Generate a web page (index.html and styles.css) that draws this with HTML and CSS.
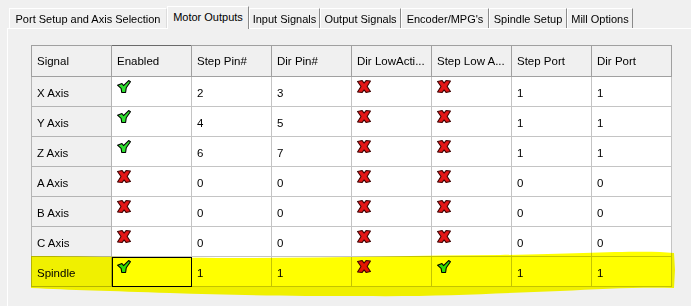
FILE: index.html
```html
<!DOCTYPE html>
<html>
<head>
<meta charset="utf-8">
<link rel="stylesheet" href="styles.css">
</head>
<body>
<svg class="defs" width="0" height="0">
  <symbol id="ok" viewBox="0 0 13 12">
    <path d="M0.5 4.8 L4.6 3.2 L6.1 5.2 L10.8 0.5 L12.5 1.6 L8.6 7.2 L8 11.5 L4.4 11.5 L3.8 7.8 Z" fill="#2ee02e" stroke="#000" stroke-width="1" stroke-linejoin="round"/>
  </symbol>
  <symbol id="no" viewBox="0 0 13 12">
    <path d="M0.5 1.3 L4.8 0.5 L6.6 2.8 L8.4 0.5 L12.5 0.9 L9.4 6 L12.5 10.7 L8.4 11.5 L6.6 9.2 L4.8 11.5 L0.5 11.1 L3.7 6 Z" fill="#e41616" stroke="#3c0000" stroke-width="1" stroke-linejoin="round"/>
  </symbol>
</svg>

<div class="tabs">
  <div class="tab t1">Port Setup and Axis Selection</div>
  <div class="tab t2 sel">Motor Outputs</div>
  <div class="tab t3">Input Signals</div>
  <div class="tab t4">Output Signals</div>
  <div class="tab t5">Encoder/MPG's</div>
  <div class="tab t6">Spindle Setup</div>
  <div class="tab t7">Mill Options</div>
</div>

<div class="panel">
  <table class="grid">
    <thead>
      <tr class="head">
        <th>Signal</th>
        <th class="cur">Enabled</th>
        <th>Step Pin#</th>
        <th>Dir Pin#</th>
        <th>Dir LowActi...</th>
        <th>Step Low A...</th>
        <th>Step Port</th>
        <th>Dir Port</th>
      </tr>
    </thead>
    <tbody>
      <tr>
        <th class="rh">X Axis</th>
        <td class="ic"><svg class="i"><use href="#ok"/></svg></td>
        <td>2</td><td>3</td>
        <td class="ic"><svg class="i"><use href="#no"/></svg></td>
        <td class="ic"><svg class="i"><use href="#no"/></svg></td>
        <td>1</td><td>1</td>
      </tr>
      <tr>
        <th class="rh">Y Axis</th>
        <td class="ic"><svg class="i"><use href="#ok"/></svg></td>
        <td>4</td><td>5</td>
        <td class="ic"><svg class="i"><use href="#no"/></svg></td>
        <td class="ic"><svg class="i"><use href="#no"/></svg></td>
        <td>1</td><td>1</td>
      </tr>
      <tr>
        <th class="rh">Z Axis</th>
        <td class="ic"><svg class="i"><use href="#ok"/></svg></td>
        <td>6</td><td>7</td>
        <td class="ic"><svg class="i"><use href="#no"/></svg></td>
        <td class="ic"><svg class="i"><use href="#no"/></svg></td>
        <td>1</td><td>1</td>
      </tr>
      <tr>
        <th class="rh">A Axis</th>
        <td class="ic"><svg class="i"><use href="#no"/></svg></td>
        <td>0</td><td>0</td>
        <td class="ic"><svg class="i"><use href="#no"/></svg></td>
        <td class="ic"><svg class="i"><use href="#no"/></svg></td>
        <td>0</td><td>0</td>
      </tr>
      <tr>
        <th class="rh">B Axis</th>
        <td class="ic"><svg class="i"><use href="#no"/></svg></td>
        <td>0</td><td>0</td>
        <td class="ic"><svg class="i"><use href="#no"/></svg></td>
        <td class="ic"><svg class="i"><use href="#no"/></svg></td>
        <td>0</td><td>0</td>
      </tr>
      <tr>
        <th class="rh">C Axis</th>
        <td class="ic"><svg class="i"><use href="#no"/></svg></td>
        <td>0</td><td>0</td>
        <td class="ic"><svg class="i"><use href="#no"/></svg></td>
        <td class="ic"><svg class="i"><use href="#no"/></svg></td>
        <td>0</td><td>0</td>
      </tr>
      <tr>
        <th class="rh">Spindle</th>
        <td class="ic selcell"><svg class="i"><use href="#ok"/></svg></td>
        <td>1</td><td>1</td>
        <td class="ic"><svg class="i"><use href="#no"/></svg></td>
        <td class="ic"><svg class="i"><use href="#ok"/></svg></td>
        <td>1</td><td>1</td>
      </tr>
    </tbody>
  </table>
</div>

<svg class="hl" width="691" height="306" viewBox="0 0 691 306">
  <path d="M31 256 C 90 256, 160 258, 250 258 C 340 258, 420 255, 500 255 C 570 254, 620 251, 660 252 L 674 253 L 675 270 L 674 288 C 640 287, 600 289, 560 291 C 500 293, 440 297, 360 296 C 290 296, 230 295, 170 293 C 110 291, 70 290, 31 288 Z" fill="#ffff00"/>
</svg>
</body>
</html>
```

FILE: styles.css
```css
html, body {
  margin: 0;
  padding: 0;
}

body {
  width: 691px;
  height: 306px;
  overflow: hidden;
  position: relative;
  background: #f0f0f0;
  font-family: "Liberation Sans", Arial, sans-serif;
  color: #000;
}

.defs {
  position: absolute;
  width: 0;
  height: 0;
}

/* ---------- tabs ---------- */
.tabs {
  display: flex;
  align-items: flex-end;
  height: 28px;
  padding-left: 9px;
  box-sizing: border-box;
}

.tab {
  height: 20px;
  box-sizing: border-box;
  font-size: 11px;
  line-height: 20px;
  text-align: center;
  white-space: nowrap;
  background: #f0f0f0;
  border-top: 1px solid #ffffff;
  border-left: 1px solid #ffffff;
  border-right: 1px solid #8a8a8a;
}

.tab.sel {
  height: 23px;
  margin-bottom: -1px;
  line-height: 20px;
  position: relative;
  z-index: 1;
}

.t1 { width: 158px; border-right-color: #dcdcdc; }
.t2 { width: 82px; }
.t3 { width: 71px; }
.t4 { width: 81px; }
.t5 { width: 88px; }
.t6 { width: 78px; }
.t7 { width: 66px; }

/* ---------- panel ---------- */
.panel {
  margin-left: 7px;
  height: 278px;
  box-sizing: border-box;
  border-top: 1px solid #ffffff;
  border-left: 1px solid #ffffff;
  padding: 16px 0 0 23px;
}

/* ---------- grid ---------- */
.grid {
  border-collapse: collapse;
  table-layout: fixed;
  width: 641px;
  font-size: 11.5px;
  background: #ffffff;
  border: 1px solid #8c8c8c;
}

.grid tr {
  height: 30px;
}

.grid tr.head {
  height: 31px;
}

.grid th,
.grid td {
  padding: 3px 4px 0 5px;
  text-align: left;
  font-weight: normal;
  white-space: nowrap;
  overflow: hidden;
  vertical-align: middle;
  border: 1px solid #c4c4c4;
}

.grid thead th {
  background: #f0f0f0;
  padding-top: 0;
  border-color: #a0a0a0;
}

.grid thead th.cur {
  border-left-color: #6a6a6a;
  border-top-color: #6a6a6a;
}

.grid th.rh {
  background: #f0f0f0;
  border-color: #b4b4b4;
}

.grid td.ic {
  vertical-align: top;
  padding-top: 3px;
  line-height: 0;
}

.grid td.selcell {
  outline: 1px solid #000;
  outline-offset: -1px;
}

.i {
  width: 14px;
  height: 13px;
  display: block;
}

/* ---------- marker highlight ---------- */
.hl {
  position: absolute;
  left: 0;
  top: 0;
  pointer-events: none;
  mix-blend-mode: multiply;
}
```
